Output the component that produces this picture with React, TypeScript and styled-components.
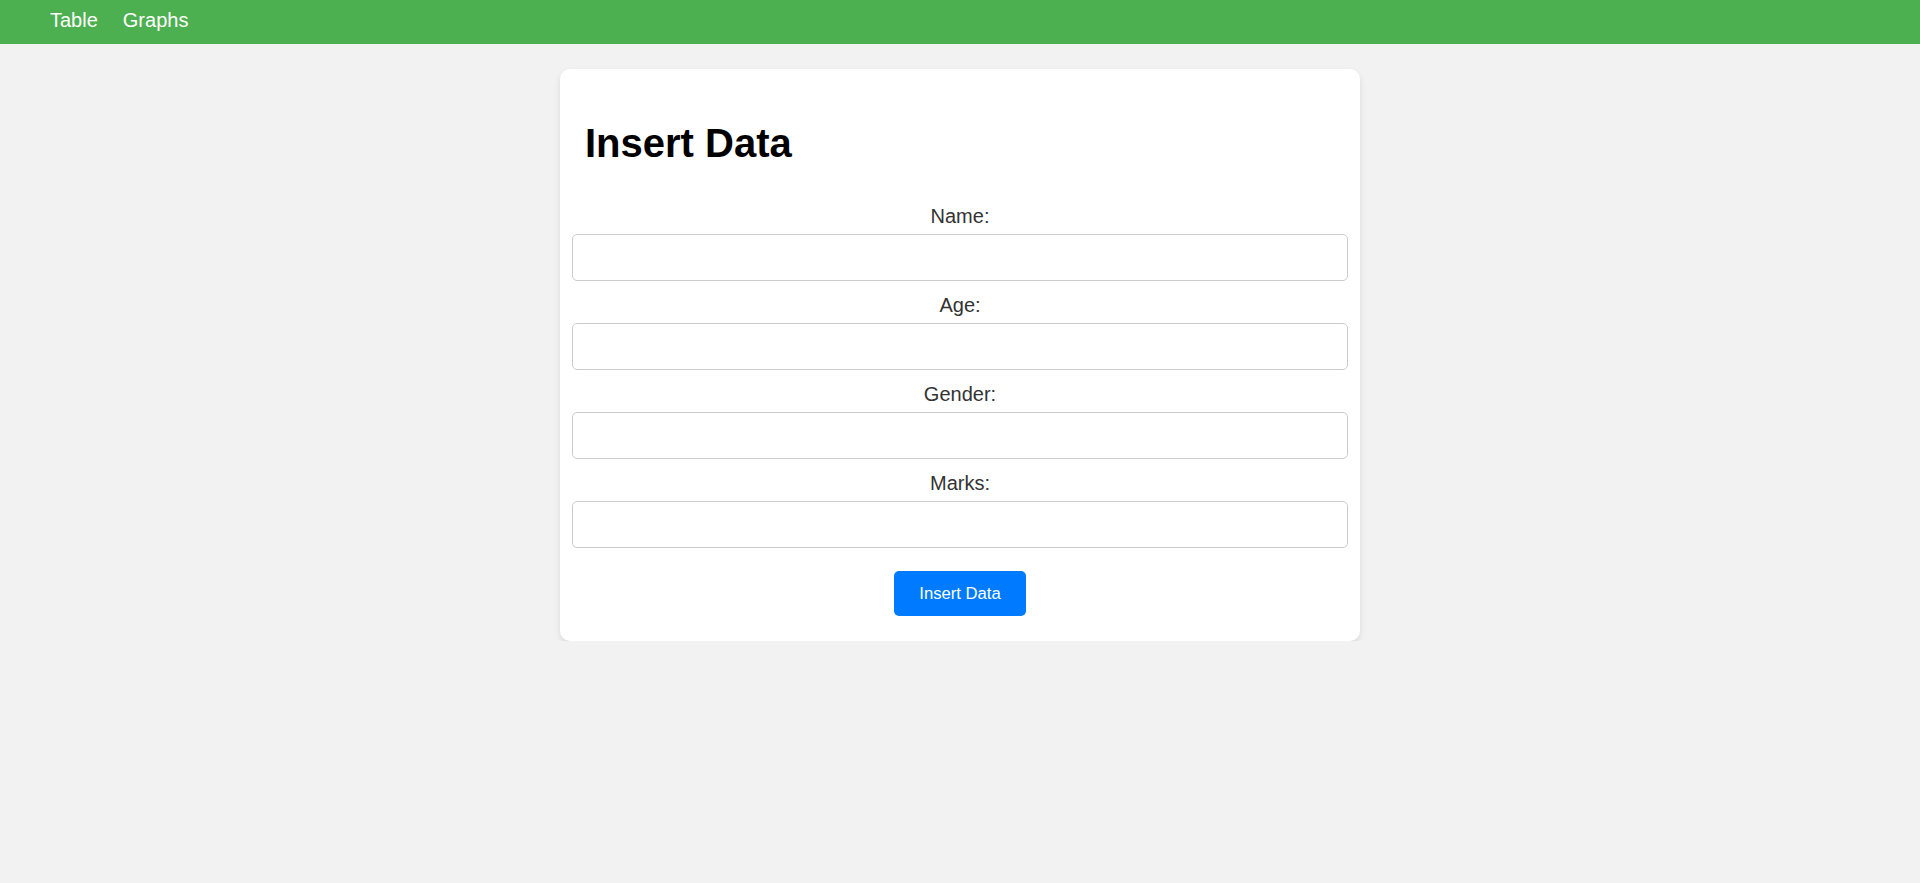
import React from "react";
import styled, { createGlobalStyle } from "styled-components";

const GlobalStyle = createGlobalStyle`
  html, body {
    margin: 0;
    padding: 0;
    background: #f2f2f2;
    font-family: "Liberation Sans", Arial, sans-serif;
  }
  * { box-sizing: border-box; }
`;

const NavBar = styled.nav`
  height: 44px;
  background: #4caf50;
  display: flex;
  align-items: flex-start;
  padding: 9px 0 0 50px;
  gap: 25px;
`;

const NavLink = styled.a`
  color: #fff;
  font-size: 20px;
  line-height: 23px;
  text-decoration: none;
  cursor: pointer;
`;

const Card = styled.div`
  width: 800px;
  margin: 25px auto 0;
  background: #fff;
  border-radius: 10px;
  box-shadow: 0 3px 6px rgba(0, 0, 0, 0.1);
  padding: 0 12px 25px;
`;

const Heading = styled.h1`
  margin: 0;
  padding: 51px 13px 0;
  font-size: 40px;
  line-height: 46px;
  font-weight: 700;
  color: #000;
`;

const Form = styled.form`
  display: flex;
  flex-direction: column;
  padding-top: 39px;
`;

const Label = styled.label`
  display: block;
  text-align: center;
  font-size: 20px;
  line-height: 23px;
  color: #333;
  margin-bottom: 6px;
`;

const Input = styled.input`
  display: block;
  width: 100%;
  height: 47px;
  border: 1px solid #ccc;
  border-radius: 5px;
  padding: 0 12px;
  font-size: 16.67px;
  font-family: "Liberation Sans", Arial, sans-serif;
  margin: 0 0 13px;
  background: #fff;
  outline: none;
  box-shadow: none;
  appearance: none;
`;

const SubmitButton = styled.button`
  align-self: center;
  width: 132px;
  height: 45px;
  margin-top: 10px;
  border: none;
  border-radius: 5px;
  background: #007bff;
  color: #fff;
  font-size: 16.67px;
  font-family: "Liberation Sans", Arial, sans-serif;
  cursor: pointer;
`;

const fields = ["Name", "Age", "Gender", "Marks"];

export default function App() {
  return (
    <>
      <GlobalStyle />
      <NavBar>
        <NavLink>Table</NavLink>
        <NavLink>Graphs</NavLink>
      </NavBar>
      <Card>
        <Heading>Insert Data</Heading>
        <Form onSubmit={(e) => e.preventDefault()}>
          {fields.map((f) => (
            <React.Fragment key={f}>
              <Label htmlFor={f.toLowerCase()}>{f}:</Label>
              <Input id={f.toLowerCase()} type="text" />
            </React.Fragment>
          ))}
          <SubmitButton type="submit">Insert Data</SubmitButton>
        </Form>
      </Card>
    </>
  );
}
